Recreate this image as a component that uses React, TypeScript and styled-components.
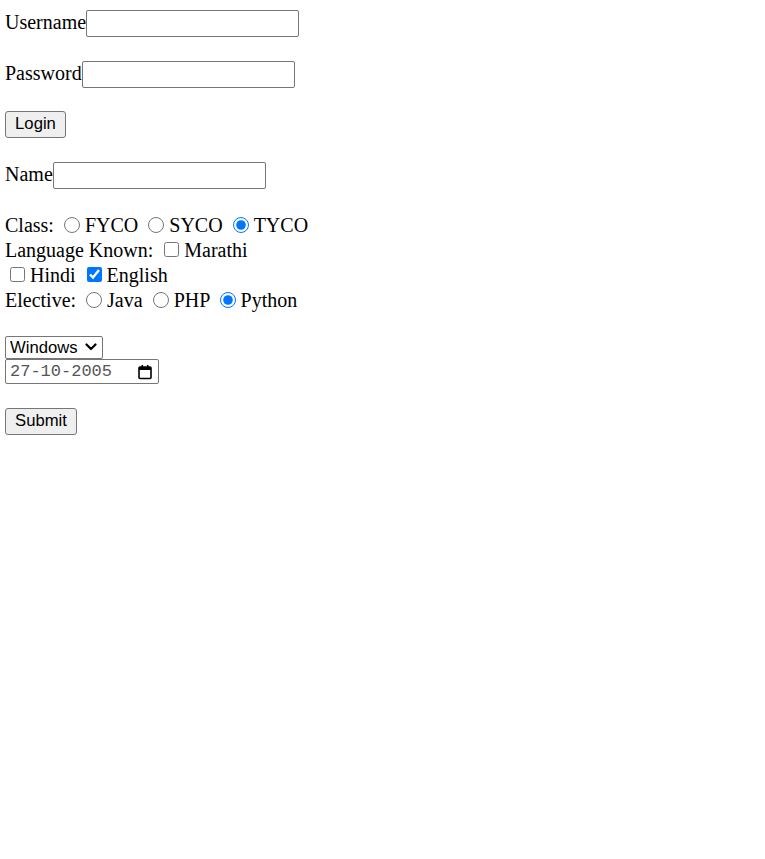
import React from "react";
import styled, { createGlobalStyle } from "styled-components";

const Global = createGlobalStyle`
  html, body { margin: 0; padding: 0; background: #fff; }
  body {
    font-family: "Liberation Serif", "Times New Roman", serif;
    font-size: 20px;
    color: #000;
  }
`;

const Page = styled.form`
  padding: 10px 0 0 5px;
  display: flex;
  flex-direction: column;
  align-items: flex-start;
`;

const FieldRow = styled.div<{ $mt?: number }>`
  display: flex;
  align-items: center;
  height: 27px;
  margin-top: ${(p) => p.$mt ?? 0}px;
`;

const Label = styled.span`
  line-height: 23px;
  padding-bottom: 2px;
  white-space: nowrap;
`;

const TextInput = styled.input`
  box-sizing: border-box;
  width: 213px;
  height: 27px;
  margin: 0;
  padding: 1px 3px;
  border: 1px solid #767676;
  border-radius: 2px;
  background: #fff;
  font-family: "Liberation Sans", Arial, sans-serif;
  font-size: 16.67px;
  outline: none;
`;

const Button = styled.button<{ $mt?: number; $w: number }>`
  box-sizing: border-box;
  width: ${(p) => p.$w}px;
  height: 27px;
  margin: ${(p) => p.$mt ?? 0}px 0 0 0;
  padding: 0;
  border: 1px solid #767676;
  border-radius: 3px;
  background: #efefef;
  color: #000;
  font-family: "Liberation Sans", Arial, sans-serif;
  font-size: 16.67px;
  line-height: 1;
`;

const Options = styled.div`
  margin-top: 24px;
  line-height: 25px;
  white-space: nowrap;
`;

const Line = styled.div`
  height: 25px;
  line-height: 25px;
`;

const Radio = styled.input.attrs({ type: "radio" })`
  width: 16px;
  height: 16px;
  margin: 0 5px 0 5px;
  vertical-align: -1px;
  accent-color: #0075ff;
`;

const Check = styled.input.attrs({ type: "checkbox" })<{ $ml?: number }>`
  width: 15px;
  height: 15px;
  margin: 0 5px 0 ${(p) => p.$ml ?? 6}px;
  vertical-align: 0px;
  accent-color: #0075ff;
`;

const SelectWrap = styled.div`
  position: relative;
  margin-top: 22px;
  width: 98px;
  height: 23px;
`;

const Select = styled.select`
  box-sizing: border-box;
  appearance: none;
  width: 98px;
  height: 23px;
  margin: 0;
  padding: 0 0 0 4px;
  border: 1px solid #767676;
  border-radius: 2px;
  background: #fff;
  color: #000;
  font-family: "Liberation Sans", Arial, sans-serif;
  font-size: 16.67px;
  outline: none;
`;

const Chevron = styled.svg`
  position: absolute;
  right: 6px;
  top: 8px;
  pointer-events: none;
`;

const DateBox = styled.div`
  box-sizing: border-box;
  width: 154px;
  height: 25px;
  margin-top: 1px;
  padding: 0 5px 0 4px;
  border: 1px solid #767676;
  border-radius: 2px;
  display: flex;
  align-items: center;
  justify-content: space-between;
  font-family: "Liberation Mono", "DejaVu Sans Mono", monospace;
  font-size: 17px;
  color: #555;
`;

const CalIcon = () => (
  <svg width="16" height="16" viewBox="0 0 16 16" aria-hidden="true">
    <rect x="2" y="3" width="12" height="11.5" rx="1" fill="none" stroke="#000" strokeWidth="1.6" />
    <rect x="2" y="3" width="12" height="3" fill="#000" />
    <rect x="4.5" y="1" width="1.6" height="3" fill="#000" />
    <rect x="9.9" y="1" width="1.6" height="3" fill="#000" />
  </svg>
);

export default function App() {
  return (
    <>
      <Global />
      <Page onSubmit={(e) => e.preventDefault()}>
        <FieldRow>
          <Label>Username</Label>
          <TextInput type="text" />
        </FieldRow>
        <FieldRow $mt={24}>
          <Label>Password</Label>
          <TextInput type="password" />
        </FieldRow>
        <Button type="button" $mt={23} $w={61}>Login</Button>
        <FieldRow $mt={24}>
          <Label>Name</Label>
          <TextInput type="text" />
        </FieldRow>
        <Options>
          <Line>
            Class: <Radio name="cls" />FYCO <Radio name="cls" />SYCO <Radio name="cls" defaultChecked />TYCO
          </Line>
          <Line>
            Language Known: <Check />Marathi
          </Line>
          <Line>
            <Check $ml={5} />Hindi <Check defaultChecked />English
          </Line>
          <Line>
            Elective: <Radio name="el" />Java <Radio name="el" />PHP <Radio name="el" defaultChecked />Python
          </Line>
        </Options>
        <SelectWrap>
          <Select defaultValue="Windows">
            <option>Windows</option>
            <option>Linux</option>
            <option>Mac</option>
          </Select>
          <Chevron width="12" height="8" viewBox="0 0 12 8" aria-hidden="true">
            <path d="M1.5 1.5 L6 6 L10.5 1.5" fill="none" stroke="#000" strokeWidth="2.2" strokeLinecap="round" strokeLinejoin="round" />
          </Chevron>
        </SelectWrap>
        <DateBox>
          <span>27-10-2005</span>
          <CalIcon />
        </DateBox>
        <Button type="submit" $mt={24} $w={72}>Submit</Button>
      </Page>
    </>
  );
}
